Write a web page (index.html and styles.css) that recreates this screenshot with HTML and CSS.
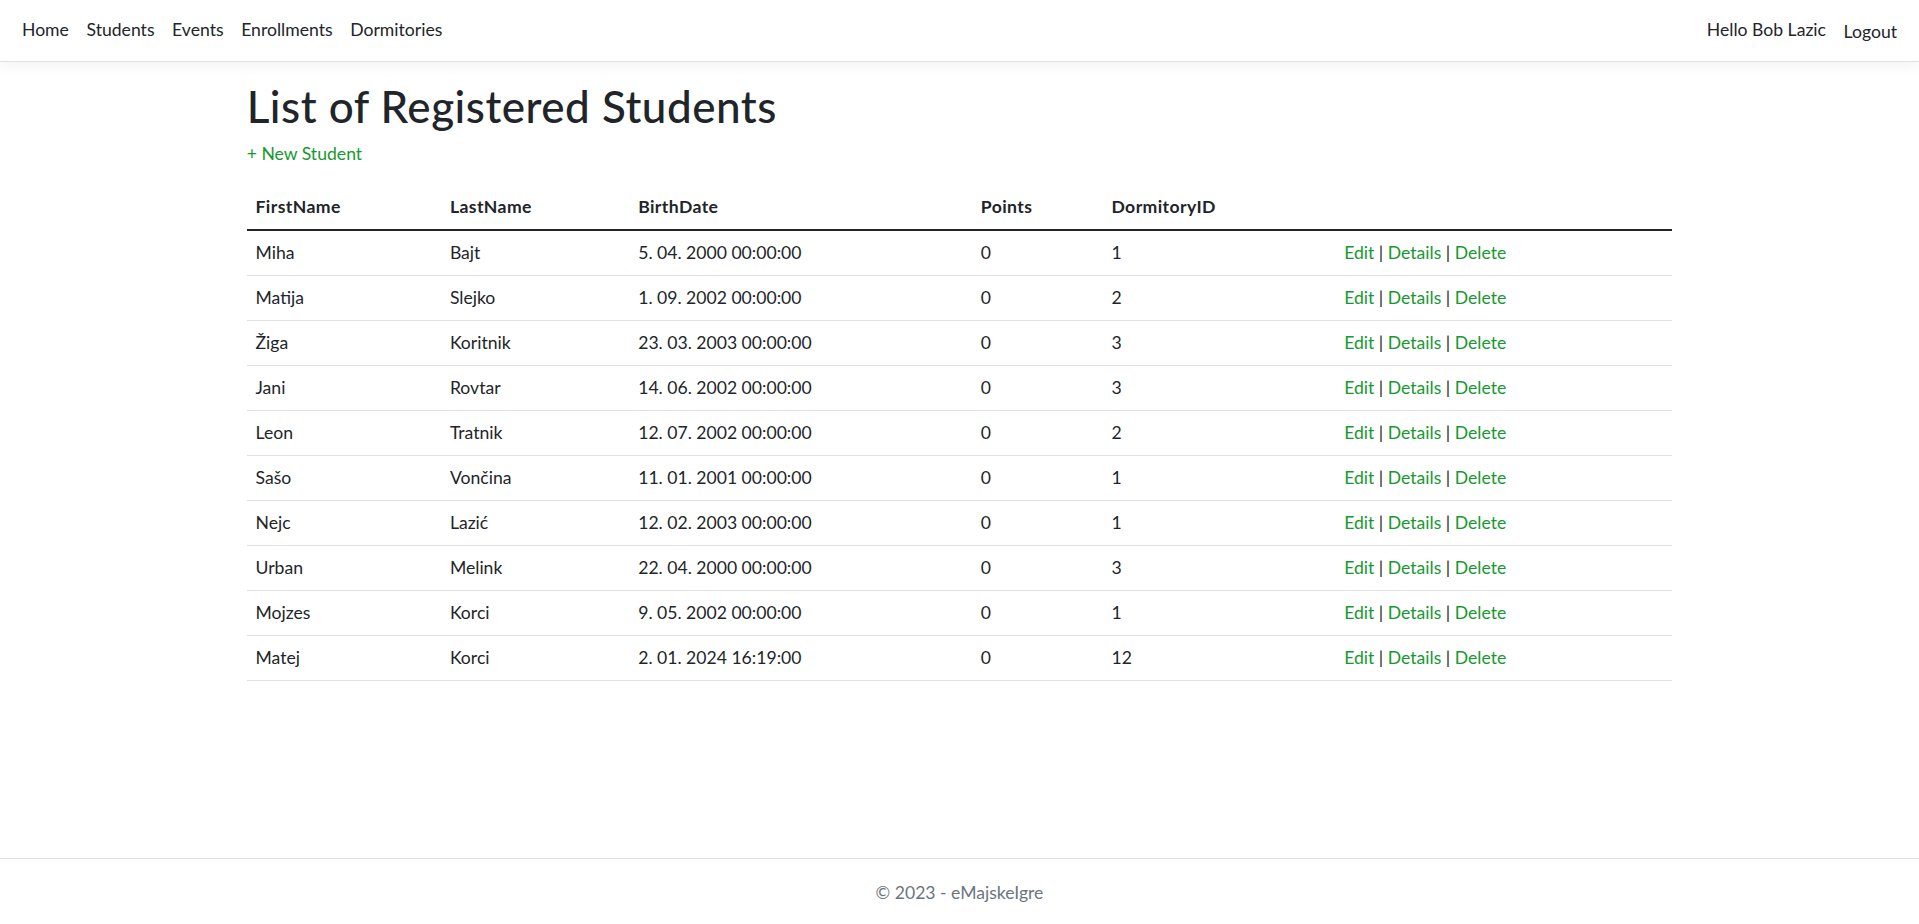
FILE: index.html
```html
<!DOCTYPE html>
<html lang="en">
<head>
<meta charset="utf-8">
<title>Students - eMajskeIgre</title>
<link rel="stylesheet" href="styles.css">
</head>
<body>
<header>
  <nav class="navbar">
    <div class="navbar-inner">
      <ul class="nav-list">
        <li><a class="nav-link" href="#">Home</a></li>
        <li><a class="nav-link" href="#">Students</a></li>
        <li><a class="nav-link" href="#">Events</a></li>
        <li><a class="nav-link" href="#">Enrollments</a></li>
        <li><a class="nav-link" href="#">Dormitories</a></li>
      </ul>
      <ul class="nav-list">
        <li><a class="nav-link" href="#">Hello Bob Lazic</a></li>
        <li><button class="nav-link logout" type="button">Logout</button></li>
      </ul>
    </div>
  </nav>
</header>
<div class="container">
  <main class="main">
    <h1 class="title">List of Registered Students</h1>
    <p class="create"><a class="link" href="#">+ New Student</a></p>
    <table class="table">
      <thead>
        <tr>
          <th class="c1">FirstName</th>
          <th class="c2">LastName</th>
          <th class="c3">BirthDate</th>
          <th class="c4">Points</th>
          <th class="c5">DormitoryID</th>
          <th class="c6"></th>
        </tr>
      </thead>
      <tbody>
        <tr><td>Miha</td><td>Bajt</td><td>5. 04. 2000 00:00:00</td><td>0</td><td>1</td><td><a class="link" href="#">Edit</a> | <a class="link" href="#">Details</a> | <a class="link" href="#">Delete</a></td></tr>
        <tr><td>Matija</td><td>Slejko</td><td>1. 09. 2002 00:00:00</td><td>0</td><td>2</td><td><a class="link" href="#">Edit</a> | <a class="link" href="#">Details</a> | <a class="link" href="#">Delete</a></td></tr>
        <tr><td>Žiga</td><td>Koritnik</td><td>23. 03. 2003 00:00:00</td><td>0</td><td>3</td><td><a class="link" href="#">Edit</a> | <a class="link" href="#">Details</a> | <a class="link" href="#">Delete</a></td></tr>
        <tr><td>Jani</td><td>Rovtar</td><td>14. 06. 2002 00:00:00</td><td>0</td><td>3</td><td><a class="link" href="#">Edit</a> | <a class="link" href="#">Details</a> | <a class="link" href="#">Delete</a></td></tr>
        <tr><td>Leon</td><td>Tratnik</td><td>12. 07. 2002 00:00:00</td><td>0</td><td>2</td><td><a class="link" href="#">Edit</a> | <a class="link" href="#">Details</a> | <a class="link" href="#">Delete</a></td></tr>
        <tr><td>Sašo</td><td>Vončina</td><td>11. 01. 2001 00:00:00</td><td>0</td><td>1</td><td><a class="link" href="#">Edit</a> | <a class="link" href="#">Details</a> | <a class="link" href="#">Delete</a></td></tr>
        <tr><td>Nejc</td><td>Lazić</td><td>12. 02. 2003 00:00:00</td><td>0</td><td>1</td><td><a class="link" href="#">Edit</a> | <a class="link" href="#">Details</a> | <a class="link" href="#">Delete</a></td></tr>
        <tr><td>Urban</td><td>Melink</td><td>22. 04. 2000 00:00:00</td><td>0</td><td>3</td><td><a class="link" href="#">Edit</a> | <a class="link" href="#">Details</a> | <a class="link" href="#">Delete</a></td></tr>
        <tr><td>Mojzes</td><td>Korci</td><td>9. 05. 2002 00:00:00</td><td>0</td><td>1</td><td><a class="link" href="#">Edit</a> | <a class="link" href="#">Details</a> | <a class="link" href="#">Delete</a></td></tr>
        <tr><td>Matej</td><td>Korci</td><td>2. 01. 2024 16:19:00</td><td>0</td><td>12</td><td><a class="link" href="#">Edit</a> | <a class="link" href="#">Details</a> | <a class="link" href="#">Delete</a></td></tr>
      </tbody>
    </table>
  </main>
</div>
<footer class="footer">© 2023 - eMajskeIgre</footer>
</body>
</html>
```

FILE: styles.css
```css
*, *::before, *::after {
  box-sizing: border-box;
}

html, body {
  margin: 0;
  padding: 0;
}

body {
  font-family: Lato, "Liberation Sans", "Noto Sans", sans-serif;
  font-size: 17.6px;
  line-height: 1.5;
  color: #212529;
  background: #fff;
  min-height: 100vh;
  display: flex;
  flex-direction: column;
}

.navbar {
  background: #fff;
  border-bottom: 1px solid #dee2e6;
  box-shadow: 0 4.4px 13.2px rgba(0, 0, 0, 0.05);
  padding: 8.5px 0;
  margin-bottom: 17.6px;
}

.navbar-inner {
  display: flex;
  justify-content: space-between;
  align-items: center;
  padding: 0 13.2px;
}

.nav-list {
  display: flex;
  list-style: none;
  margin: 0;
  padding: 0;
}

.nav-link {
  display: block;
  padding: 8.8px;
  color: #212529;
  text-decoration: none;
  font: inherit;
  line-height: 26.4px;
  background: none;
  border: 0;
}

.logout {
  padding-top: 10.4px;
  padding-bottom: 7.2px;
  cursor: pointer;
}

.container {
  width: 100%;
  max-width: 1452px;
  margin: 0 auto;
  padding: 0 13.2px;
  flex: 1;
}

.main {
  padding-bottom: 17.6px;
}

.title {
  font-size: 44px;
  font-weight: 500;
  line-height: 1.2;
  letter-spacing: 0.5px;
  margin: 0 0 8.8px;
}

.create {
  margin: 0 0 17.6px;
}

.link {
  color: #16992f;
  text-decoration: none;
}

.table {
  width: 100%;
  border-collapse: collapse;
  table-layout: fixed;
  margin-bottom: 17.6px;
}

.table th,
.table td {
  padding: 8.8px;
  text-align: left;
  vertical-align: top;
  border-bottom: 1px solid #dee2e6;
  line-height: 26.4px;
}

.table th {
  font-weight: 700;
  letter-spacing: 0.4px;
  vertical-align: bottom;
  border-bottom: 2px solid #212529;
}

.c1 { width: 194.4px; }
.c2 { width: 188.3px; }
.c3 { width: 342.7px; }
.c4 { width: 130.6px; }
.c5 { width: 232.7px; }

.footer {
  border-top: 1px solid #dee2e6;
  color: #6c757d;
  text-align: center;
  padding-top: 3px;
  line-height: 62px;
  white-space: nowrap;
}
```
